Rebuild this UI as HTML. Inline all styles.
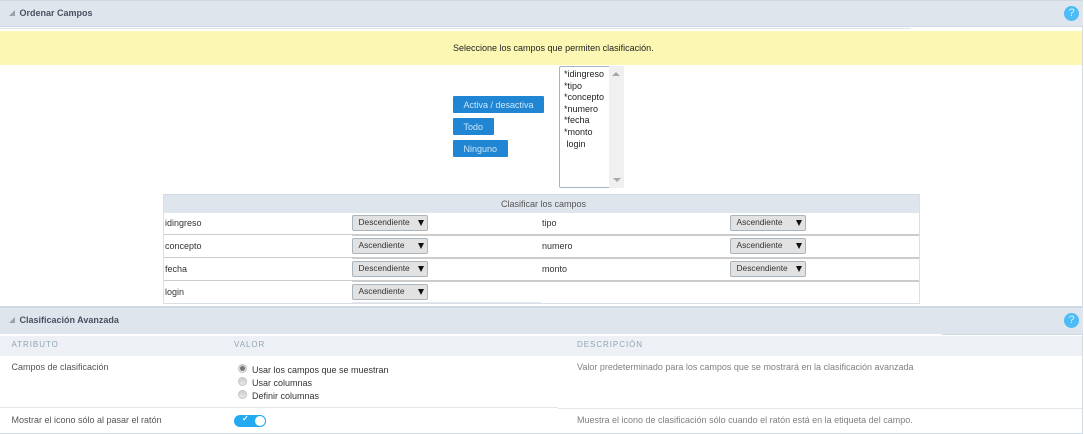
<!DOCTYPE html>
<html><head><meta charset="utf-8">
<style>
html,body{margin:0;padding:0;background:#fff;}
#p{position:relative;width:1084px;height:434px;overflow:hidden;font-family:"Liberation Sans",sans-serif;font-size:9px;color:#333;background:#fff;}
#p div,#p span.a{position:absolute;white-space:nowrap;}
.hdr{left:0;width:1083px;background:#dfe5ed;border-top:1px solid #cfd9e1;border-bottom:1px solid #cfd9e1;box-sizing:border-box;}
.ttl{font-weight:bold;font-size:9px;color:#4a5060;}
.tri{width:0;height:0;border-style:solid;border-width:0 0 6px 6px;border-color:transparent transparent #9aa3ad transparent;}
.q{width:15px;height:15px;border-radius:50%;background:#4dbcf6;color:#d8f0fd;font-size:11px;line-height:15px;text-align:center;}
.btn{background:#2086d3;color:#cfe6f7;height:17px;line-height:19px;border-radius:1px;font-size:9px;box-sizing:border-box;padding-left:10.5px;}
.l{font-size:9px;line-height:11px;color:#333;}
.sel{width:76px;height:16px;background:#e2e2e2;border:1px solid #a9b4bd;border-radius:2px;box-sizing:border-box;font-size:8.4px;line-height:12px;padding-left:5.5px;color:#333;}
.sel:after{content:"";position:absolute;right:3.5px;top:4px;border-style:solid;border-width:6px 3.5px 0 3.5px;border-color:#111 transparent transparent transparent;}
.ln{height:2px;background:#ccc;}
.thin{height:1px;background:#e3e8ed;}
.rad{width:7px;height:7px;border-radius:50%;background:linear-gradient(#cfcfcf,#e8e8e8);border:1px solid #c4c4c4;box-sizing:content-box;}
.gt{font-size:8px;letter-spacing:.95px;color:#8fa5b3;line-height:10px;}
.dsc{font-size:9px;color:#808080;line-height:11px;}
</style></head><body>
<div id="p">
  <div style="top:0;width:1px;height:434px;background:#d5dde4;left:1082px;"></div>

  <div class="hdr" style="top:0;height:27px;"></div>
  <div style="left:0;top:27px;width:911px;height:1px;background:#fff;"></div>
  <div style="left:0;top:28px;width:911px;height:1px;background:#dfe5ed;"></div>
  <div class="tri" style="left:9px;top:10px;"></div>
  <div class="ttl" style="left:19.5px;top:8px;line-height:11px;">Ordenar Campos</div>
  <div class="q" style="left:1064px;top:6px;">?</div>

  <div style="left:0;top:31px;width:1082px;height:34px;background:#fcf8b3;"></div>
  <div class="l" style="left:453px;top:42.5px;color:#222;">Seleccione los campos que permiten clasificación.</div>

  <div class="btn" style="left:453px;top:96px;width:91px;">Activa / desactiva</div>
  <div class="btn" style="left:453px;top:118px;width:41px;">Todo</div>
  <div class="btn" style="left:453px;top:140px;width:55px;">Ninguno</div>

  <div style="left:559px;top:66px;width:65px;height:122px;border:1px solid #a9b4bd;border-right:0;box-sizing:border-box;border-radius:2px 0 0 2px;"></div>
  <div style="left:609px;top:66px;width:15px;height:122px;background:#f0f0f0;"></div>
  <div style="left:612px;top:72px;border-style:solid;border-width:0 4px 4px 4px;border-color:transparent transparent #a8a8a8 transparent;"></div>
  <div style="left:613px;top:178px;border-style:solid;border-width:4px 4px 0 4px;border-color:#a8a8a8 transparent transparent transparent;"></div>
  <div class="l" style="left:564px;top:69px;line-height:11.6px;color:#222;">*idingreso<br>*tipo<br>*concepto<br>*numero<br>*fecha<br>*monto<br>&nbsp;login</div>

  <div style="left:163px;top:194px;width:757px;height:110px;border:1px solid #d8dfe6;border-top:1px solid #cfd9e1;box-sizing:border-box;"></div>
  <div style="left:164px;top:195px;width:755px;height:18px;background:#dfe5ed;"></div>
  <div class="l" style="left:501px;top:198.5px;color:#555;">Clasificar los campos</div>

  <div class="ln" style="left:164px;top:234px;width:188px;height:1px;background:#ccc;"></div>
  <div class="ln" style="left:352px;top:234px;width:567px;"></div>
  <div class="ln" style="left:164px;top:257px;width:188px;height:1px;background:#ccc;"></div>
  <div class="ln" style="left:352px;top:257px;width:567px;"></div>
  <div class="ln" style="left:164px;top:280px;width:188px;height:1px;background:#ccc;"></div>
  <div class="ln" style="left:352px;top:280px;width:567px;"></div>
  <div style="left:352px;top:302px;width:189px;height:1px;background:#e3e8ed;"></div>

  <div class="l" style="left:165px;top:218px;">idingreso</div>
  <div class="l" style="left:165px;top:241px;">concepto</div>
  <div class="l" style="left:165px;top:264px;">fecha</div>
  <div class="l" style="left:165px;top:287px;">login</div>
  <div class="l" style="left:542px;top:218px;">tipo</div>
  <div class="l" style="left:542px;top:241px;">numero</div>
  <div class="l" style="left:542px;top:264px;">monto</div>

  <div class="sel" style="left:352px;top:215px;">Descendiente</div>
  <div class="sel" style="left:352px;top:238px;">Ascendiente</div>
  <div class="sel" style="left:352px;top:261px;">Descendiente</div>
  <div class="sel" style="left:352px;top:284px;">Ascendiente</div>
  <div class="sel" style="left:730px;top:215px;">Ascendiente</div>
  <div class="sel" style="left:730px;top:238px;">Ascendiente</div>
  <div class="sel" style="left:730px;top:261px;">Descendiente</div>

  <div class="hdr" style="top:306px;height:29px;border-top-width:2px;"></div>
  <div style="left:0;top:334px;width:942px;height:1px;background:#fff;"></div>
  <div class="tri" style="left:9px;top:317px;"></div>
  <div class="ttl" style="left:19.5px;top:315px;line-height:11px;">Clasificación Avanzada</div>
  <div class="q" style="left:1064px;top:313px;">?</div>

  <div style="left:0;top:336px;width:1082px;height:20px;background:#edf1f5;"></div>
  <div class="gt" style="left:11.5px;top:340px;">ATRIBUTO</div>
  <div class="gt" style="left:234px;top:340px;">VALOR</div>
  <div class="gt" style="left:577px;top:340px;">DESCRIPCIÓN</div>

  <div class="l" style="left:11.5px;top:362px;color:#555;">Campos de clasificación</div>
  <div class="rad" style="left:238px;top:364px;"></div>
  <div style="left:240px;top:366px;width:5px;height:5px;border-radius:50%;background:#777;"></div>
  <div class="rad" style="left:238px;top:377px;"></div>
  <div class="rad" style="left:238px;top:390px;"></div>
  <div class="l" style="left:252px;top:365px;">Usar los campos que se muestran</div>
  <div class="l" style="left:252px;top:378px;">Usar columnas</div>
  <div class="l" style="left:252px;top:391px;">Definir columnas</div>
  <div class="dsc" style="left:577px;top:362px;">Valor predeterminado para los campos que se mostrará en la clasificación avanzada</div>

  <div class="thin" style="left:0;top:407px;width:234px;"></div>
  <div class="thin" style="left:234px;top:407px;width:324px;"></div>
  <div class="thin" style="left:558px;top:408px;width:524px;"></div>

  <div class="l" style="left:11.5px;top:415px;color:#555;">Mostrar el icono sólo al pasar el ratón</div>
  <div style="left:234px;top:415px;width:32px;height:12px;border-radius:6px;background:#25aaf2;"></div>
  <div style="left:254px;top:415px;width:10px;height:10px;border-radius:50%;background:#fff;border:1px solid #25aaf2;box-sizing:content-box;"></div>
  <div style="left:242px;top:413px;font-size:8px;font-weight:bold;line-height:11px;color:#fff;">✓</div>
  <div class="dsc" style="left:577px;top:415px;">Muestra el icono de clasificación sólo cuando el ratón está en la etiqueta del campo.</div>

  <div style="left:0;top:433px;width:1083px;height:1px;background:#d5dde4;"></div>
</div>
</body></html>
